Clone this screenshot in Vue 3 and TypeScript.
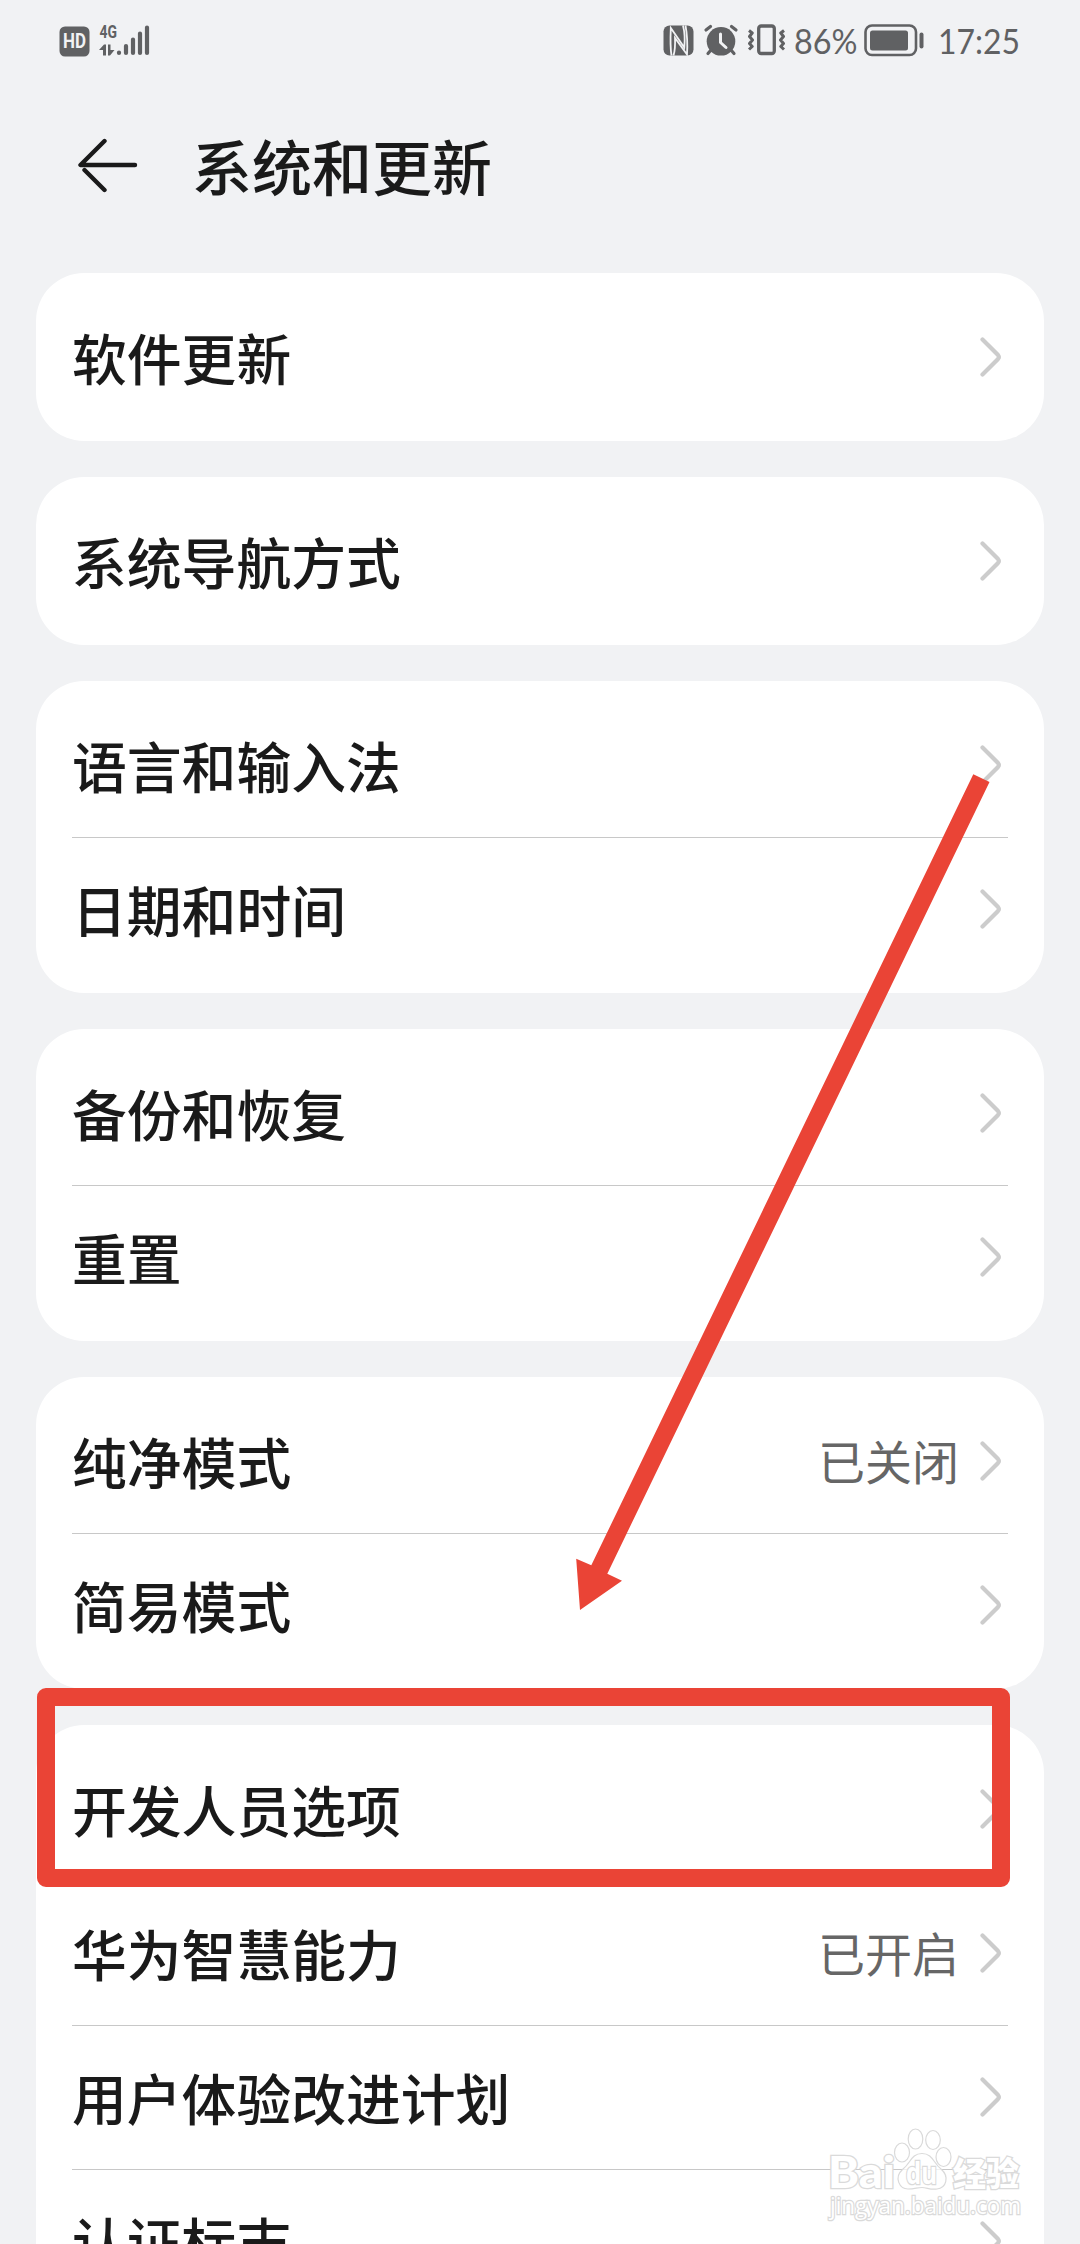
<script setup lang="ts">
interface Row {
  label: string
  value?: string
}

const groups: Row[][] = [
  [{ label: '软件更新' }],
  [{ label: '系统导航方式' }],
  [{ label: '语言和输入法' }, { label: '日期和时间' }],
  [{ label: '备份和恢复' }, { label: '重置' }],
  [{ label: '纯净模式', value: '已关闭' }, { label: '简易模式' }],
  [
    { label: '开发人员选项' },
    { label: '华为智慧能力', value: '已开启' },
    { label: '用户体验改进计划' },
    { label: '认证标志' },
  ],
]
</script>

<template>
  <div class="screen">
    <div class="status">
      <div class="status-left">
        <svg class="hd" width="31" height="31" viewBox="0 0 31 31">
          <rect x="0.5" y="0.5" width="30" height="30" rx="5.5" fill="#606163" />
          <text x="15.5" y="22.4" text-anchor="middle" textLength="23" lengthAdjust="spacingAndGlyphs">HD</text>
        </svg>
        <svg class="signal" width="52" height="34" viewBox="0 0 52 34">
          <text x="0.5" y="14" class="net" textLength="17.5" lengthAdjust="spacingAndGlyphs">4G</text>
          <path d="M0 26 5 20.500H7V31.500H4V26ZM9 20.500H11.500V26H15.500L11 31.500H9Z" fill="#606163" />
          <g stroke="#606163" stroke-width="4.2" stroke-linecap="round">
            <path d="M20 28.5V29M27 22V29M34 15.5V29M41 9.5V29M48 3.5V29" />
          </g>
        </svg>
      </div>
      <div class="status-right">
        <svg class="nfc" width="31" height="31" viewBox="0 0 31 31">
          <rect x="0.5" y="0.5" width="30" height="30" rx="6" fill="#606163" />
          <path d="M8.500 30.500Q7 22 7.800 3L21.300 22.500Q22.500 10 20 .5M10.500 30.500Q12.500 24 12 13L24 29.500Q25 14 22.500 .5" fill="none" stroke="#f1f2f4" stroke-width="1.800" />
        </svg>
        <svg class="alarm" width="34" height="31" viewBox="0 0 34 31">
          <circle cx="17" cy="16.300" r="14.300" fill="#606163" />
          <path d="M2 5 6.500 1.500M32 5 27.500 1.500M7 25 4 28.500M27 25 30 28.500" stroke="#606163" stroke-width="3.200" stroke-linecap="round" />
          <path d="M16.500 9V17.500L22 22.500" fill="none" stroke="#f1f2f4" stroke-width="3" stroke-linecap="round" stroke-linejoin="round" />
        </svg>
        <svg class="vibe" width="39" height="32" viewBox="0 0 39 32">
          <rect x="11.700" y="2" width="15.600" height="27.500" rx="2.500" fill="none" stroke="#606163" stroke-width="3.300" />
          <path d="M2 6.500 5.200 9 2.500 12.500 5.500 16 2.500 19.500 5.200 22.500 2 25.500M37 6.500 33.800 9 36.500 12.500 33.500 16 36.500 19.500 33.800 22.500 37 25.500" fill="none" stroke="#606163" stroke-width="3" stroke-linejoin="round" />
        </svg>
        <svg class="pct" width="64" height="40" viewBox="0 0 64 40">
          <text x="0" y="29" class="num" textLength="63.500" lengthAdjust="spacingAndGlyphs">86%</text>
        </svg>
        <svg class="battery" width="61" height="33" viewBox="0 0 61 33">
          <rect x="1.500" y="1.500" width="50.500" height="29.500" rx="6.500" fill="none" stroke="#606163" stroke-width="2.600" />
          <rect x="6" y="6.500" width="38" height="20" rx="2.500" fill="#606163" />
          <path d="M57.500 10.500V22.500" stroke="#606163" stroke-width="4" stroke-linecap="round" />
        </svg>
        <svg class="clock" width="82" height="40" viewBox="0 0 82 40">
          <text x="0" y="29" class="num" textLength="82" lengthAdjust="spacingAndGlyphs">17:25</text>
        </svg>
      </div>
    </div>

    <header class="header">
      <svg class="back" width="60" height="56" viewBox="0 0 60 56">
        <path d="M26.500 3 2.500 27H57M6.500 32 26.500 52" fill="none" stroke="#1a1a1a" stroke-width="4.400" stroke-linecap="round" stroke-linejoin="round" />
      </svg>
      <h1>系统和更新</h1>
    </header>

    <main class="groups">
      <section v-for="(group, i) in groups" :key="i" class="card">
        <div v-for="row in group" :key="row.label" class="row">
          <span class="label">{{ row.label }}</span>
          <span v-if="row.value" class="value">{{ row.value }}</span>
          <svg class="chevron" width="22" height="40" viewBox="0 0 22 40">
            <path d="M2.500 2.500 18 18Q19.700 20 18 22L2.500 37.500" fill="none" stroke="#ccc" stroke-width="4.200" stroke-linecap="round" />
          </svg>
        </div>
      </section>
    </main>

    <div class="highlight"></div>
    <svg class="pointer" width="1080" height="2244" viewBox="0 0 1080 2244">
      <path d="M973.300 774.300 989.500 782 607.300 1573.700 622 1580.700 580 1610 576.200 1558.700 591.300 1565.300Z" fill="#ea4436" />
    </svg>

    <svg class="watermark" width="200" height="100" viewBox="0 0 200 100">
      <g fill="#fff" stroke="#dadada" stroke-width="1.200">
        <text x="7" y="60" class="wm-brand" textLength="67" lengthAdjust="spacingAndGlyphs">Bai</text>
        <g fill-opacity=".75">
          <ellipse cx="81" cy="24.500" rx="7.500" ry="9.500" />
          <ellipse cx="94.500" cy="11" rx="7.300" ry="10" />
          <ellipse cx="112" cy="12" rx="7.300" ry="9.500" />
          <ellipse cx="122.500" cy="29" rx="7.500" ry="9.500" />
          <path d="M101 25.500C90 25.500 90 35 82 41 72 50 79 61 87 61 94 61 96 59.500 101 59.500S109 62 116 61C125 60 129 49 120 41 112 35 112 25.500 101 25.500Z" />
        </g>
        <text x="85" y="55.500" class="wm-du" textLength="31" lengthAdjust="spacingAndGlyphs">du</text>
        <text x="132" y="58" class="wm-cn" textLength="66" lengthAdjust="spacingAndGlyphs">经验</text>
        <text x="9" y="86" class="wm-url" textLength="191" lengthAdjust="spacingAndGlyphs">jingyan.baidu.com</text>
      </g>
    </svg>
  </div>
</template>

<style>
body {
  margin: 0;
  background: #f1f2f4;
}
</style>

<style scoped>
.screen {
  position: relative;
  width: 1080px;
  height: 2244px;
  overflow: hidden;
  background: #f1f2f4;
  color: #1a1a1a;
  font-family: 'Noto Sans CJK SC', sans-serif;
}
.status {
  box-sizing: border-box;
  display: flex;
  justify-content: space-between;
  height: 81px;
  padding: 24px 60px 0 59px;
}
.status svg {
  overflow: visible;
}
.status-left,
.status-right {
  display: flex;
  align-items: flex-start;
}
.hd {
  margin-top: 2px;
}
.hd text {
  font: 700 20px Roboto, sans-serif;
  fill: #f1f2f4;
}
.signal {
  margin-left: 9px;
}
.net {
  font: 700 19px Roboto, sans-serif;
  fill: #606163;
}
.nfc {
  margin-top: 1px;
}
.alarm {
  margin: 1px 0 0 10px;
}
.vibe {
  margin-left: 9px;
}
.pct {
  margin: 1px 0 0 8px;
}
.battery {
  margin-left: 6px;
}
.clock {
  margin: 1px 0 0 13px;
}
.num {
  font: 400 35px Lato, sans-serif;
  fill: #606163;
}
.header {
  display: flex;
  align-items: center;
  height: 168px;
  padding-left: 78px;
}
.back {
  margin-top: 2px;
}
.header h1 {
  margin: 0 0 0 54px;
  font-size: 60px;
  font-weight: 500;
  line-height: 80px;
}
.groups {
  display: flex;
  flex-direction: column;
  gap: 36px;
  padding: 24px 36px 0;
}
.card {
  padding: 12px 36px;
  border-radius: 48px;
  background: #fff;
}
.row {
  box-sizing: border-box;
  display: flex;
  align-items: center;
  height: 144px;
  padding-right: 6px;
}
.row + .row {
  box-shadow: inset 0 1px 0 #c8c8c8;
}
.label {
  flex: 1;
  margin-bottom: 2px;
  font-size: 54.8px;
  font-weight: 500;
  line-height: 80px;
}
.value {
  margin: 0 21px 3px 0;
  color: #666;
  font-size: 47px;
  line-height: 70px;
}
.highlight {
  position: absolute;
  left: 37px;
  top: 1688px;
  box-sizing: border-box;
  width: 973px;
  height: 199px;
  border: 18px solid #ea4436;
  border-radius: 9px;
}
.pointer {
  position: absolute;
  left: 0;
  top: 0;
}
.watermark {
  position: absolute;
  left: 821px;
  top: 2128px;
  overflow: visible;
}
.watermark text {
  paint-order: stroke;
  stroke-width: 2.6px;
}
.wm-brand {
  font: 900 44px Lato, sans-serif;
}
.wm-du {
  font: 700 30px 'Open Sans', sans-serif;
}
.wm-cn {
  font: 900 33px 'Noto Sans CJK SC', sans-serif;
}
.wm-url {
  font: 400 24px 'Open Sans', sans-serif;
}
</style>
